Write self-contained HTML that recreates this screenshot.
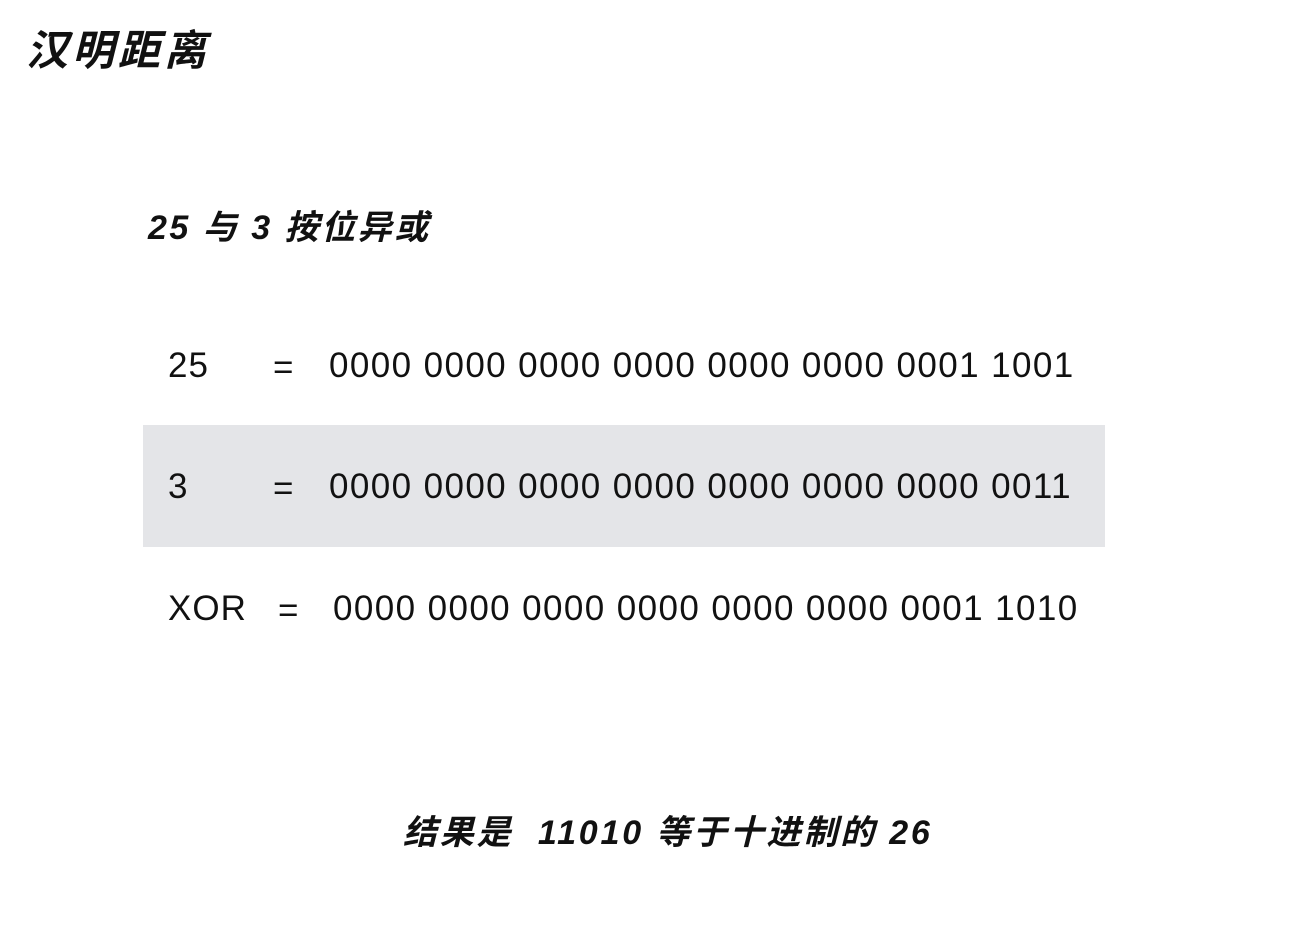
<!DOCTYPE html>
<html><head><meta charset="utf-8"><style>
html,body{margin:0;padding:0;background:#fff;width:1302px;height:938px;overflow:hidden;position:relative;font-family:"Liberation Sans","Noto Sans CJK SC",sans-serif;color:#111}
.a{position:absolute;white-space:nowrap}
.bi{font-weight:bold;font-style:italic}
.band{position:absolute;left:143px;top:425px;width:962px;height:122px;background:#e4e5e8}
.r{font-size:35px;line-height:40px}
.b{letter-spacing:1.4px}
</style></head><body>
<div class="a bi" style="left:26px;top:26px;font-size:42px;line-height:50px;letter-spacing:4px">汉明距离</div>
<div class="a bi" style="left:148px;top:206px;font-size:34px;line-height:44px;letter-spacing:2.5px">25 与 3 按位异或</div>
<div class="band"></div>
<div class="a r" style="left:168px;top:346px;letter-spacing:1px">25</div>
<div class="a r" style="left:273px;top:348px">=</div>
<div class="a r b" style="left:329px;top:346px">0000 0000 0000 0000 0000 0000 0001 1001</div>
<div class="a r" style="left:168px;top:467px">3</div>
<div class="a r" style="left:273px;top:469px">=</div>
<div class="a r b" style="left:329px;top:467px">0000 0000 0000 0000 0000 0000 0000 0011</div>
<div class="a r" style="left:168px;top:589px;letter-spacing:1px">XOR</div>
<div class="a r" style="left:278px;top:591px">=</div>
<div class="a r b" style="left:333px;top:589px">0000 0000 0000 0000 0000 0000 0001 1010</div>
<div class="a bi" style="left:403px;top:811px;font-size:34px;line-height:44px;letter-spacing:2.8px">结果是&nbsp; 11010 等于十进制的 26</div>
</body></html>
